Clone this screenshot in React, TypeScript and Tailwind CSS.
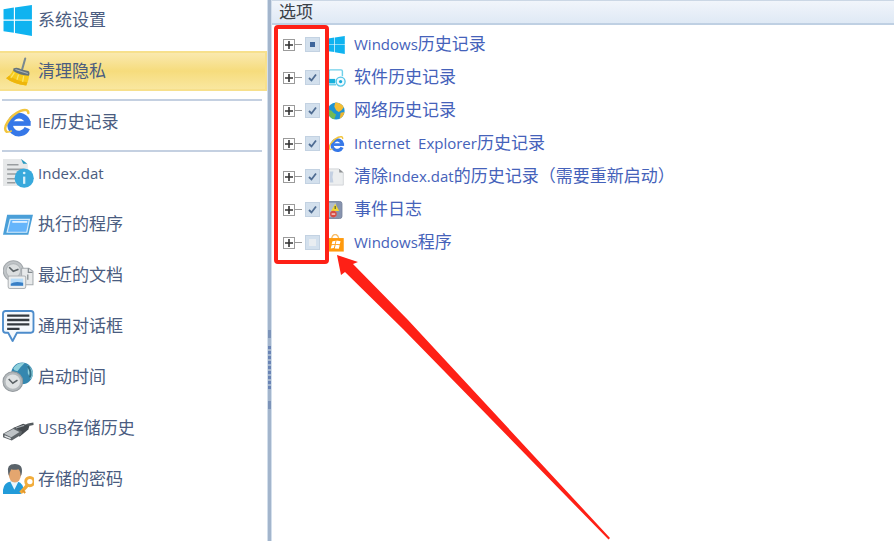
import React, { useEffect, useRef } from 'react';
import clsx from 'clsx';

type IconProps = { className?: string };

function WindowsIcon({ className }: IconProps) {
  return (
    <svg viewBox="0 0 30 30" className={className} fill="#0fb3f0" aria-hidden="true">
      <path d="M.5 4 10.500 2.500V14H.5zM11.600 2.300 28 0v14H11.600zM.5 15.200h10v11.600L.5 25.500zM11.600 15.200H28V30l-16.400-3z" />
    </svg>
  );
}

function BroomIcon({ className }: IconProps) {
  return (
    <svg viewBox="0 0 30 30" className={className} aria-hidden="true">
      <path d="M21.500 2.500 18.500 13" stroke="#7b8990" strokeWidth="2" strokeLinecap="round" />
      <path d="M10 13Q8 18 3 21.500q7 5.500 19.500 7Q25 24 25.500 18z" fill="#f8cb1c" />
      <path d="M3 21.500q7 5.500 19.500 7l1.200-3Q13 24 6 19z" fill="#eeb60c" />
      <path d="M11 16q-1.500 3-3.500 5M15 18l-1.500 5M20 19.500 19 25" stroke="#fbe56c" strokeWidth="1.200" fill="none" />
      <path d="M10 12q4-1.500 8 1l6.500 1.500q2 1.500.5 4.500-8 0-15-4.500z" fill="#66737a" />
      <path d="m12 13 12 4" stroke="#aab3b5" strokeWidth="1" />
    </svg>
  );
}

function ExplorerIcon({ className }: IconProps) {
  return (
    <svg viewBox="0 0 30 30" className={className} fill="none" aria-hidden="true">
      <path d="M23.500 20.500A8.700 8.700 0 1 1 24 15" stroke="#3678e8" strokeWidth="5.500" />
      <path d="M9 16h17.800" stroke="#3678e8" strokeWidth="4.500" />
      <path d="M3.500 24C-1 20 7 8 17 3.800c4.500-1.800 7.500-1 7.500 2" stroke="#f2c53d" strokeWidth="2.400" strokeLinecap="round" />
      <path d="M3.500 24c1.500.7 3.500-.2 5-1" stroke="#f2c53d" strokeWidth="1.500" />
    </svg>
  );
}

function IndexIcon({ className }: IconProps) {
  return (
    <svg viewBox="0 0 30 30" className={className} aria-hidden="true">
      <path d="M0 1h18l6 5v21H0z" fill="#e6e8e9" />
      <path d="m17.500 1 6 4.500h-4z" fill="#279ac1" />
      <path d="M4 6.500h11M4 11h16M4 15.500h14M4 20h9M4 24h8" stroke="#999da0" strokeWidth="1.500" />
      <circle cx="20.500" cy="19.500" r="9.300" fill="#38a9dc" />
      <path d="M20.500 18v7" stroke="#d9f1fb" strokeWidth="2.200" />
      <circle cx="20.500" cy="14.500" r="1.300" fill="#d9f1fb" />
    </svg>
  );
}

function ProgramIcon({ className }: IconProps) {
  return (
    <svg viewBox="0 0 30 30" className={className} aria-hidden="true">
      <path d="M4 5.500h25L24.500 25H0z" fill="#4a9fd8" />
      <path d="M7 10h18.500L23 22.500H4z" fill="#65b5fb" stroke="#d6ecfb" strokeWidth="1.200" />
      <path d="M9 12.500h14.500" stroke="#eaf6ff" strokeWidth="1.600" />
    </svg>
  );
}

function RecentIcon({ className }: IconProps) {
  return (
    <svg viewBox="0 0 30 30" className={className} aria-hidden="true">
      <circle cx="10" cy="10.500" r="9.800" fill="#c1c5c8" stroke="#a2a7ab" strokeWidth="1" />
      <circle cx="10" cy="10.500" r="7" fill="#dcdfe0" stroke="#b2b7ba" />
      <path d="m6 7 4 4 5-2" stroke="#5c6367" strokeWidth="1.600" fill="none" />
      <path d="M18 8h7l4 3v13H18z" fill="#e8eaeb" stroke="#a5aaae" />
      <path d="M24.500 8v4h4M24 14v5" stroke="#858c90" strokeWidth="1.200" fill="none" />
      <rect x="5" y="15.500" width="17" height="12" rx="1.500" fill="#eceeef" stroke="#aeb2b5" />
      <path d="M7.500 18h12v7h-12z" fill="#b6dbf8" />
      <path d="M7.500 23q4-3 12-1v3h-12z" fill="#397fc5" />
    </svg>
  );
}

function DialogIcon({ className }: IconProps) {
  return (
    <svg viewBox="0 0 30 30" className={clsx('overflow-visible', className)} aria-hidden="true">
      <path d="M2.500 0h24.500q2.500 0 2.500 2.500v16q0 2.500-2.500 2.500H13.500L9.300 29 5 21H2.500Q0 21 0 18.500v-16Q0 0 2.500 0z" fill="#f5f9fd" stroke="#4d8ccb" strokeWidth="1.800" strokeLinejoin="round" />
      <path d="M4 4.500h21.500M4 8.700h21.500M4 13h21.500M4 17.200h12" stroke="#343a40" strokeWidth="2.200" />
    </svg>
  );
}

function StartupIcon({ className }: IconProps) {
  return (
    <svg viewBox="0 0 30 30" className={clsx('overflow-visible', className)} aria-hidden="true">
      <circle cx="18.500" cy="11" r="10.500" fill="#3587af" />
      <path d="M10 6q4-6 11-5l-4 4-3 4-3-1zM24 3q5 4 5 9l-2 5-3-6z" fill="#8fd0dc" />
      <path d="M24 4q4 5 2 11" stroke="#2e6e86" strokeWidth="2" fill="none" />
      <circle cx="9.500" cy="19" r="9.500" fill="#b4b9bc" stroke="#959b9f" />
      <circle cx="9.500" cy="19" r="7" fill="#dfe2e3" />
      <path d="m5.500 16.500 4 4 4.500-3" stroke="#5b6266" strokeWidth="1.500" fill="none" />
    </svg>
  );
}

function UsbIcon({ className }: IconProps) {
  return (
    <svg viewBox="0 0 30 30" className={className} aria-hidden="true">
      <path d="M21 13.500q3-2.500 8.500-3" stroke="#555b5f" strokeWidth="2.400" fill="none" />
      <path d="m10 14.500 9.500-4 6 2-1 3.500-8.500 7z" fill="#44494d" />
      <path d="m0 20 11-6 7.500 4-1 3-9 5.500-8.500-3z" fill="#5e6468" />
      <path d="m1 20 9-4.500 6 3-8 5z" fill="#bec3c6" />
      <path d="m1.500 21.500 6 2.500v1.500l-6-2.500z" fill="#e4e7e9" />
      <path d="m12.500 14.500 8-2.500" stroke="#a3a9ad" strokeWidth="1.200" />
    </svg>
  );
}

function PasswordIcon({ className }: IconProps) {
  return (
    <svg viewBox="0 0 30 30" className={className} aria-hidden="true">
      <path d="M0 29q-1-11 8-12h6q6 2 6 9l-3 3z" fill="#229bd9" />
      <path d="m7 17 4 8 4-8z" fill="#e9f6fd" />
      <ellipse cx="11.500" cy="10" rx="6" ry="8" fill="#e4a66f" />
      <path d="M5 9Q3 0 11.500 0 20 0 18 10l-1 2q0-5-2-7-4 1-7 0-2 3-2 7z" fill="#5a636a" />
      <path d="m17 28 8-9" stroke="#f2aa35" strokeWidth="3.400" />
      <path d="m19 25.500 2.500 2.500" stroke="#e3962a" strokeWidth="2" />
      <circle cx="26" cy="17" r="4" fill="#fff" stroke="#f2ad3c" strokeWidth="2.800" />
    </svg>
  );
}

function SoftwareIcon({ className }: IconProps) {
  return (
    <svg viewBox="0 0 20 20" className={className} fill="none" aria-hidden="true">
      <path d="M1 11V2.500Q1 1 2.500 1h12Q16 1 16 2.500V8M1 17.500h8" stroke="#6fd0ea" strokeWidth="1.600" />
      <path d="M0 11h8v5H0z" fill="#17b0dc" />
      <circle cx="14" cy="14" r="5" fill="#eefaff" stroke="#52c5e7" strokeWidth="1.500" />
      <circle cx="14" cy="14" r="1.800" fill="#17a9d8" />
    </svg>
  );
}

function GlobeIcon({ className }: IconProps) {
  return (
    <svg viewBox="0 0 20 20" className={className} aria-hidden="true">
      <circle cx="9" cy="10" r="9.500" fill="#1d93d4" />
      <path d="M8 .6q7 0 9.500 5.500l-2.500 3-3 2-3-2-2-4z" fill="#f3bd35" />
      <path d="M0 9q4-1 6 3l3 2-2 5.300Q0 18 0 9z" fill="#74ba54" />
      <path d="m14 12 4.300-1q-.8 5-5.300 7.500z" fill="#f0b62f" />
    </svg>
  );
}

function DocumentIcon({ className }: IconProps) {
  return (
    <svg viewBox="0 0 20 20" className={className} aria-hidden="true">
      <path d="M0 1h12l5 4v14H0z" fill="#eceeef" stroke="#d0d3d6" />
      <path d="m12.500 1 4.500 4h-4.500z" fill="#8c8f92" />
      <path d="M2 4h4l-1 6 1 6H2z" fill="#c4d0e2" />
    </svg>
  );
}

function EventIcon({ className }: IconProps) {
  return (
    <svg viewBox="0 0 20 20" className={className} aria-hidden="true">
      <path d="M0 .5h13q2.500 0 2.500 2.500v14q0 2.500-2.500 2.500H0z" fill="#8794af" stroke="#76829c" />
      <path d="M0 2h9v16H0z" fill="#b2bccb" />
      <path d="m8 3 4.500 8h-9z" fill="#f3d72f" />
      <path d="M8 5.500V9" stroke="#585b2a" strokeWidth="1.300" />
      <circle cx="6" cy="14.500" r="3.700" fill="#d84b43" />
      <path d="M4 14.500h4" stroke="#fff" strokeWidth="1.200" />
    </svg>
  );
}

function StoreIcon({ className }: IconProps) {
  return (
    <svg viewBox="0 0 20 20" className={className} aria-hidden="true">
      <path d="M4 5q1-4.500 4-4.500T12 5" stroke="#f8bd67" strokeWidth="1.500" fill="none" />
      <path d="M0 4.500h17.500v15H0z" fill="#ff9a0c" />
      <path d="m5 8 3.500-.5-1 3.500L4 11.500zm4.500-.7 4.500.7-1 3.500-4.500-.5zM4 12.500l3.500-.5-1 3.500-3.500.5zm4.500-.5 4.500.5-1 4-4.500-.5z" fill="#fff" />
    </svg>
  );
}

type Item = { label: string; Icon: React.FC<IconProps>; active?: boolean; divided?: boolean };

const menu: Item[] = [
  { label: '系统设置', Icon: WindowsIcon },
  { label: '清理隐私', Icon: BroomIcon, active: true, divided: true },
  { label: 'IE历史记录', Icon: ExplorerIcon, divided: true },
  { label: 'Index.dat', Icon: IndexIcon },
  { label: '执行的程序', Icon: ProgramIcon },
  { label: '最近的文档', Icon: RecentIcon },
  { label: '通用对话框', Icon: DialogIcon },
  { label: '启动时间', Icon: StartupIcon },
  { label: 'USB存储历史', Icon: UsbIcon },
  { label: '存储的密码', Icon: PasswordIcon },
];

type State = 'on' | 'off' | 'mixed';

const options: { label: string; Icon: React.FC<IconProps>; state: State }[] = [
  { label: 'Windows历史记录', Icon: WindowsIcon, state: 'mixed' },
  { label: '软件历史记录', Icon: SoftwareIcon, state: 'on' },
  { label: '网络历史记录', Icon: GlobeIcon, state: 'on' },
  { label: 'Internet  Explorer历史记录', Icon: ExplorerIcon, state: 'on' },
  { label: '清除Index.dat的历史记录（需要重新启动）', Icon: DocumentIcon, state: 'on' },
  { label: '事件日志', Icon: EventIcon, state: 'on' },
  { label: 'Windows程序', Icon: StoreIcon, state: 'off' },
];

// latin runs are set a little smaller than the chinese around them
function MixedText({ text }: { text: string }) {
  return (
    <>
      {text.split(/([A-Za-z. ]+)/).filter(Boolean).map((part, i) =>
        /^[A-Za-z. ]+$/.test(part) ? <span key={i} className="text-[15px]">{part}</span> : part
      )}
    </>
  );
}

function TreeCheckbox({ id, state }: { id: string; state: State }) {
  const ref = useRef<HTMLInputElement>(null);

  useEffect(() => {
    if (ref.current) ref.current.indeterminate = state === 'mixed';
  }, [state]);

  return (
    <span className="relative ml-[3px] size-[15px] shrink-0">
      <input
        ref={ref}
        id={id}
        type="checkbox"
        defaultChecked={state === 'on'}
        className="peer block size-full appearance-none border border-[#c3d2e2] bg-[#d3e0ed]"
      />
      <svg viewBox="0 0 15 15" className="pointer-events-none absolute inset-0 hidden peer-checked:block" fill="none" aria-hidden="true">
        <path d="m4 8 2.500 2.500L11 4.500" stroke="#4f6c92" strokeWidth="1.800" />
      </svg>
      <span className="pointer-events-none absolute inset-[5px] hidden bg-[#3e659a] peer-indeterminate:block" />
      {state === 'off' && <span className="pointer-events-none absolute inset-1 bg-[#e9edf1]" />}
    </span>
  );
}

function Sidebar() {
  return (
    <nav className="w-[267px] shrink-0 text-[#4a5c80]">
      <ul>
        {menu.map(({ label, Icon, active, divided }) => (
          <li key={label}>
            <button
              type="button"
              className={clsx(
                'flex h-10 w-full items-center gap-1 pl-[3px] text-left',
                active && 'border-2 border-l-0 border-[#f7e08c] bg-linear-to-b from-[#fae9ae] via-[#f6dc7c] to-[#f9e79f]'
              )}
            >
              <Icon className="size-[31px] shrink-0" />
              <span className="pb-px"><MixedText text={label} /></span>
            </button>
            {divided ? <hr className="mt-2 mr-[5px] mb-px ml-[2px] border-t-2 border-[#c4d0e1]" /> : <div className="h-[11px]" />}
          </li>
        ))}
      </ul>
    </nav>
  );
}

function Splitter() {
  return (
    <div className="flex w-[5px] shrink-0 flex-col items-center justify-center border-x border-[#d3dfec] bg-[#a3b5cc] pt-[197px]">
      <span className="h-2 w-[3px] bg-[#7c93b8]" />
      <div className="mt-2 mb-3 flex flex-col gap-[2px]">
        {Array.from({ length: 9 }, (_, i) => (
          <span key={i} className="size-[3px] bg-[#6a84b5]" />
        ))}
      </div>
      <span className="h-2 w-[3px] bg-[#7c93b8]" />
    </div>
  );
}

function OptionsTree() {
  return (
    <div className="relative pt-[3px]">
      <ul className="text-[#4562ba]">
        {options.map(({ label, Icon, state }, i) => (
          <li key={label} className="flex h-[33px] items-center pl-[11px]">
            <button type="button" aria-label={`展开 ${label}`} className="flex size-3 shrink-0 items-center justify-center border border-[#9b9b9b] bg-white">
              <svg viewBox="0 0 8 8" className="size-2" aria-hidden="true">
                <path d="M0 4h8M4 0v8" stroke="#333" strokeWidth="1.600" />
              </svg>
            </button>
            <span className="h-px w-[7px] bg-[#999]" />
            <TreeCheckbox id={`option-${i}`} state={state} />
            <Icon className="ml-2 size-[18px] shrink-0" />
            <label htmlFor={`option-${i}`} className="ml-2 pb-0.5 whitespace-pre"><MixedText text={label} /></label>
          </li>
        ))}
      </ul>

      {/* callout */}
      <div className="pointer-events-none absolute top-0 left-[2px] h-[239px] w-[55px] rounded-[4px] border-4 border-[#fe2016]" />
      <svg viewBox="0 0 276 287" className="pointer-events-none absolute top-[229px] left-[63px] h-[287px] w-[276px]" fill="#fe2016" aria-hidden="true">
        <path d="M2 1 23 8l-5 2 55 56 202 218-1.500 1.500L68 75 10 18l-4 3z" />
      </svg>
    </div>
  );
}

export default function App() {
  return (
    <div className="flex min-h-screen overflow-hidden bg-white font-['Open_Sans','Noto_Sans_CJK_SC',sans-serif] text-[17px] leading-6">
      <Sidebar />
      <Splitter />
      <main className="min-w-0 flex-1">
        <h1 className="h-[25px] border-t border-b-2 border-t-[#cbd7e5] border-b-[#bfd0e3] bg-linear-to-b from-[#f1f5fb] to-[#dfe9f5] pl-[7px] leading-[22px] text-[#3b4148]">选项</h1>
        <OptionsTree />
      </main>
    </div>
  );
}
